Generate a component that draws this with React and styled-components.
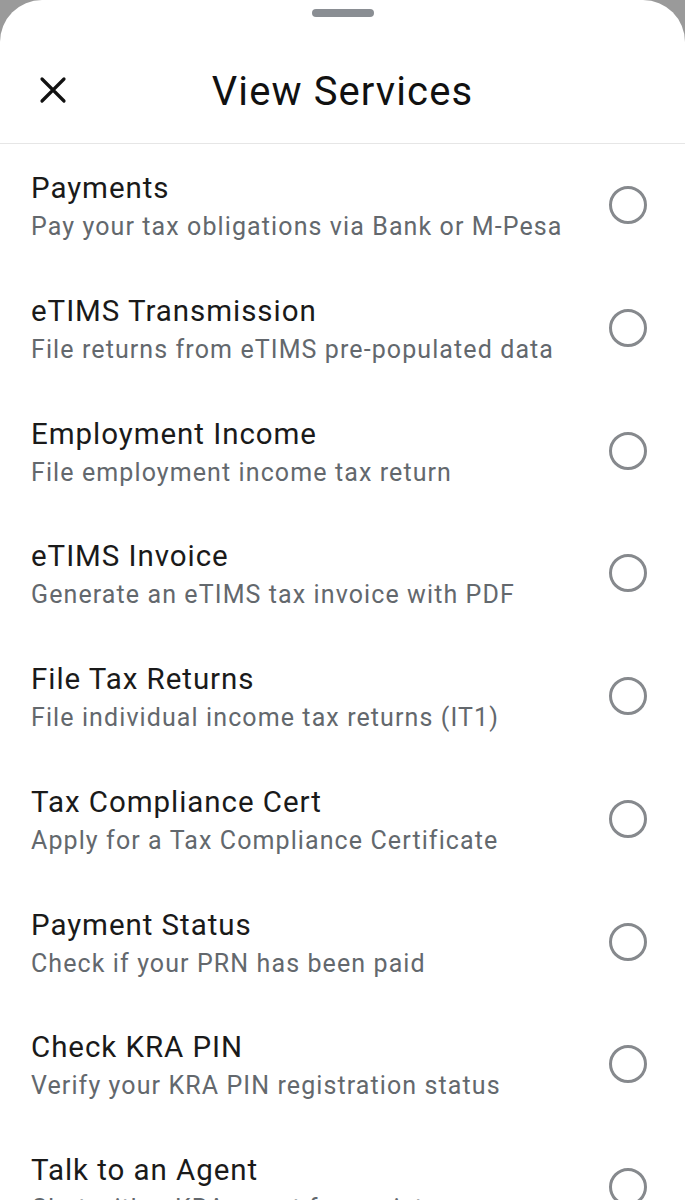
import React, { useState } from "react";
import styled, { createGlobalStyle } from "styled-components";

const GlobalStyle = createGlobalStyle`
  html, body {
    margin: 0;
    padding: 0;
    background: #9a9a9a;
    overflow: hidden;
  }
  body {
    font-family: Roboto, "Noto Sans", "Liberation Sans", sans-serif;
    -webkit-font-smoothing: antialiased;
  }
`;

const services = [
  { title: "Payments", desc: "Pay your tax obligations via Bank or M-Pesa" },
  { title: "eTIMS Transmission", desc: "File returns from eTIMS pre-populated data" },
  { title: "Employment Income", desc: "File employment income tax return" },
  { title: "eTIMS Invoice", desc: "Generate an eTIMS tax invoice with PDF" },
  { title: "File Tax Returns", desc: "File individual income tax returns (IT1)" },
  { title: "Tax Compliance Cert", desc: "Apply for a Tax Compliance Certificate" },
  { title: "Payment Status", desc: "Check if your PRN has been paid" },
  { title: "Check KRA PIN", desc: "Verify your KRA PIN registration status" },
  { title: "Talk to an Agent", desc: "Chat with a KRA agent for assistance" }
];

export default function App() {
  const [selected, setSelected] = useState(null);
  return (
    <>
      <GlobalStyle />
      <Sheet>
        <GrabArea>
          <Handle />
        </GrabArea>
        <Header>
          <CloseButton aria-label="Close">
            <svg width="28" height="28" viewBox="0 0 28 28">
              <path
                d="M3 3 L25 25 M25 3 L3 25"
                stroke="#111"
                strokeWidth="3.2"
                strokeLinecap="round"
              />
            </svg>
          </CloseButton>
          <Title>View Services</Title>
        </Header>
        <List>
          {services.map((s, i) => (
            <Row key={s.title} onClick={() => setSelected(i)}>
              <Texts>
                <ItemTitle>{s.title}</ItemTitle>
                <ItemDesc>{s.desc}</ItemDesc>
              </Texts>
              <Radio $checked={selected === i} />
            </Row>
          ))}
        </List>
      </Sheet>
    </>
  );
}

const Sheet = styled.div`
  background: #fff;
  border-radius: 42px 42px 0 0;
  min-height: 1200px;
  overflow: hidden;
`;

const GrabArea = styled.div`
  display: flex;
  justify-content: center;
  padding-top: 9px;
`;

const Handle = styled.div`
  width: 62px;
  height: 8px;
  border-radius: 4px;
  background: #8a8e93;
`;

const Header = styled.div`
  position: relative;
  display: flex;
  justify-content: center;
  padding: 51px 0 27px;
  border-bottom: 1px solid #e6e6e6;
`;

const CloseButton = styled.button`
  position: absolute;
  left: 39px;
  top: 59px;
  width: 28px;
  height: 28px;
  padding: 0;
  border: 0;
  background: none;
  display: flex;
  align-items: center;
  justify-content: center;
`;

const Title = styled.h1`
  margin: 0;
  font-size: 40px;
  line-height: 48px;
  font-weight: 400;
  color: #111;
  letter-spacing: 1.1px;
`;

const List = styled.div`
  display: flex;
  flex-direction: column;
`;

const Row = styled.div`
  display: flex;
  align-items: center;
  justify-content: space-between;
  padding: 26px 38px 23.75px 31px;
  cursor: pointer;
`;

const Texts = styled.div`
  display: flex;
  flex-direction: column;
  gap: 5px;
`;

const ItemTitle = styled.div`
  font-size: 29.5px;
  line-height: 36px;
  color: #1a1a1a;
  letter-spacing: 0.95px;
`;

const ItemDesc = styled.div`
  font-size: 25px;
  line-height: 32px;
  color: #63686d;
  letter-spacing: 1.1px;
`;

const Radio = styled.div`
  width: 38px;
  height: 38px;
  box-sizing: border-box;
  border-radius: 50%;
  border: 3.5px solid #86898d;
  flex-shrink: 0;
  margin-bottom: 3px;
  background: ${(p) =>
    p.$checked ? "radial-gradient(circle, #86898d 45%, transparent 47%)" : "transparent"};
`;
